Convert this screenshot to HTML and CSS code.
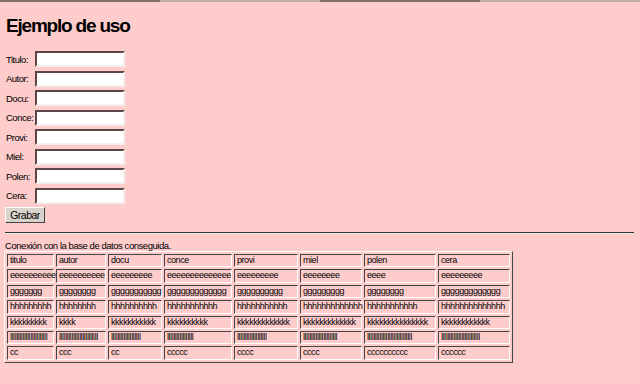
FILE: index.html
```html
<!DOCTYPE html>
<html lang="es">
  <head>
    <meta charset="UTF-8" />
    <title>Ejemplo de uso</title>
    <link rel="stylesheet" href="styles.css">
  </head>
  <body>
    <!-- tira superior -->
    <div class="strip">
      <span class="dark"></span>
      <span class="light"></span>
      <span class="dark"></span>
      <span class="light"></span>
    </div>

    <div class="page">
      <h1>Ejemplo de uso</h1>

      <form class="form">
        <label>Titulo:</label><input type="text" />
        <label>Autor:</label><input type="text" />
        <label>Docu:</label><input type="text" />
        <label>Conce:</label><input type="text" />
        <label>Provi:</label><input type="text" />
        <label>Miel:</label><input type="text" />
        <label>Polen:</label><input type="text" />
        <label>Cera:</label><input type="text" />
        <button type="button" class="btn">Grabar</button>
      </form>

      <hr />

      <p class="status">Conexión con la base de datos conseguida.</p>

      <table class="data">
        <tr><td>titulo</td><td>autor</td><td>docu</td><td>conce</td><td>provi</td><td>miel</td><td>polen</td><td>cera</td></tr>
        <tr><td>eeeeeeeeee</td><td>eeeeeeeeee</td><td>eeeeeeeee</td><td>eeeeeeeeeeeeee</td><td>eeeeeeeee</td><td>eeeeeeee</td><td>eeee</td><td>eeeeeeeee</td></tr>
        <tr><td>ggggggg</td><td>gggggggg</td><td>ggggggggggg</td><td>ggggggggggggg</td><td>gggggggggg</td><td>ggggggggg</td><td>gggggggg</td><td>ggggggggggggg</td></tr>
        <tr><td>hhhhhhhhh</td><td>hhhhhhhh</td><td>hhhhhhhhhh</td><td>hhhhhhhhhhh</td><td>hhhhhhhhhhh</td><td>hhhhhhhhhhhhh</td><td>hhhhhhhhhhh</td><td>hhhhhhhhhhhhhh</td></tr>
        <tr><td>kkkkkkkkk</td><td>kkkk</td><td>kkkkkkkkkkk</td><td>kkkkkkkkkk</td><td>kkkkkkkkkkkkk</td><td>kkkkkkkkkkkkk</td><td>kkkkkkkkkkkkkkk</td><td>kkkkkkkkkkkk</td></tr>
        <tr><td>llllllllllllllllllllllll</td><td>lllllllllllllllllllllllll</td><td>lllllllllllllllllll</td><td>lllllllllllllllll</td><td>lllllllllllllllllll</td><td>llllllllllllllllllllll</td><td>lllllllllllllllllllllllllllll</td><td>lllllllllllllllllllllllll</td></tr>
        <tr><td>cc</td><td>ccc</td><td>cc</td><td>ccccc</td><td>cccc</td><td>cccc</td><td>cccccccccc</td><td>cccccc</td></tr>
      </table>
    </div>
  </body>
</html>
```

FILE: styles.css
```css
/* Pagina general */
body {
  margin: 0;
  background-color: #ffcccc;
  color: #000;
  font-family: "Liberation Sans", Arial, sans-serif;
}

.strip {
  display: flex;
  height: 2px;
}

.strip span {
  flex: 1;
}

.strip .dark {
  background-color: #7d726a;
}

.strip .light {
  background-color: #b9b0a8;
}

.page {
  padding: 0 5px;
}

h1 {
  font-size: 19px;
  letter-spacing: -1.2px;
  font-weight: bold;
  margin: 14px 0 15px 1px;
  line-height: 20px;
}

/* Formulario */
.form {
  display: grid;
  grid-template-columns: 30px 90px;
  row-gap: 3.5px;
  align-items: center;
  font-size: 9.5px;
  letter-spacing: -0.5px;
}

.form label {
  padding-left: 1px;
}

.form input {
  width: 90px;
  height: 16px;
  box-sizing: border-box;
  margin: 0;
  padding: 0 2px;
  background-color: #fff;
  border: 2px solid;
  border-color: #5a4646 #f4eeee #f4eeee #5a4646;
}

.btn {
  grid-column: 1 / 3;
  justify-self: start;
  width: 40px;
  height: 16px;
  padding: 0;
  font-family: inherit;
  font-size: 10.5px;
  letter-spacing: -0.5px;
  color: #000;
  background-color: #d8d4cc;
  border: 1px solid;
  border-color: #fff #404040 #404040 #fff;
}

hr {
  margin: 9px 1px 0 0;
  border: 0;
  border-top: 1px solid #333;
  border-bottom: 1px solid #f4eaea;
  height: 0;
}

.status {
  font-size: 9.5px;
  letter-spacing: -0.45px;
  margin: 6px 0 0 0;
  line-height: 11px;
}

/* Tabla de datos */
.data {
  table-layout: fixed;
  border: 1px solid;
  border-color: #fff #444 #444 #fff;
  border-spacing: 2px;
  width: 509px;
  margin-left: -1px;
  font-size: 9px;
  letter-spacing: -0.45px;
}

.data td {
  border: 1px solid;
  border-color: #444 #fff #fff #444;
  padding: 0 1px 0 2px;
  height: 11.4px;
  line-height: 11.4px;
  white-space: nowrap;
}

.data td:nth-child(1) { width: 42px; }
.data td:nth-child(2) { width: 45px; }
.data td:nth-child(3) { width: 49px; }
.data td:nth-child(4) { width: 63px; }
.data td:nth-child(5) { width: 59px; }
.data td:nth-child(6) { width: 57px; }
.data td:nth-child(7) { width: 67px; }
.data td:nth-child(8) { width: 67px; }
```
